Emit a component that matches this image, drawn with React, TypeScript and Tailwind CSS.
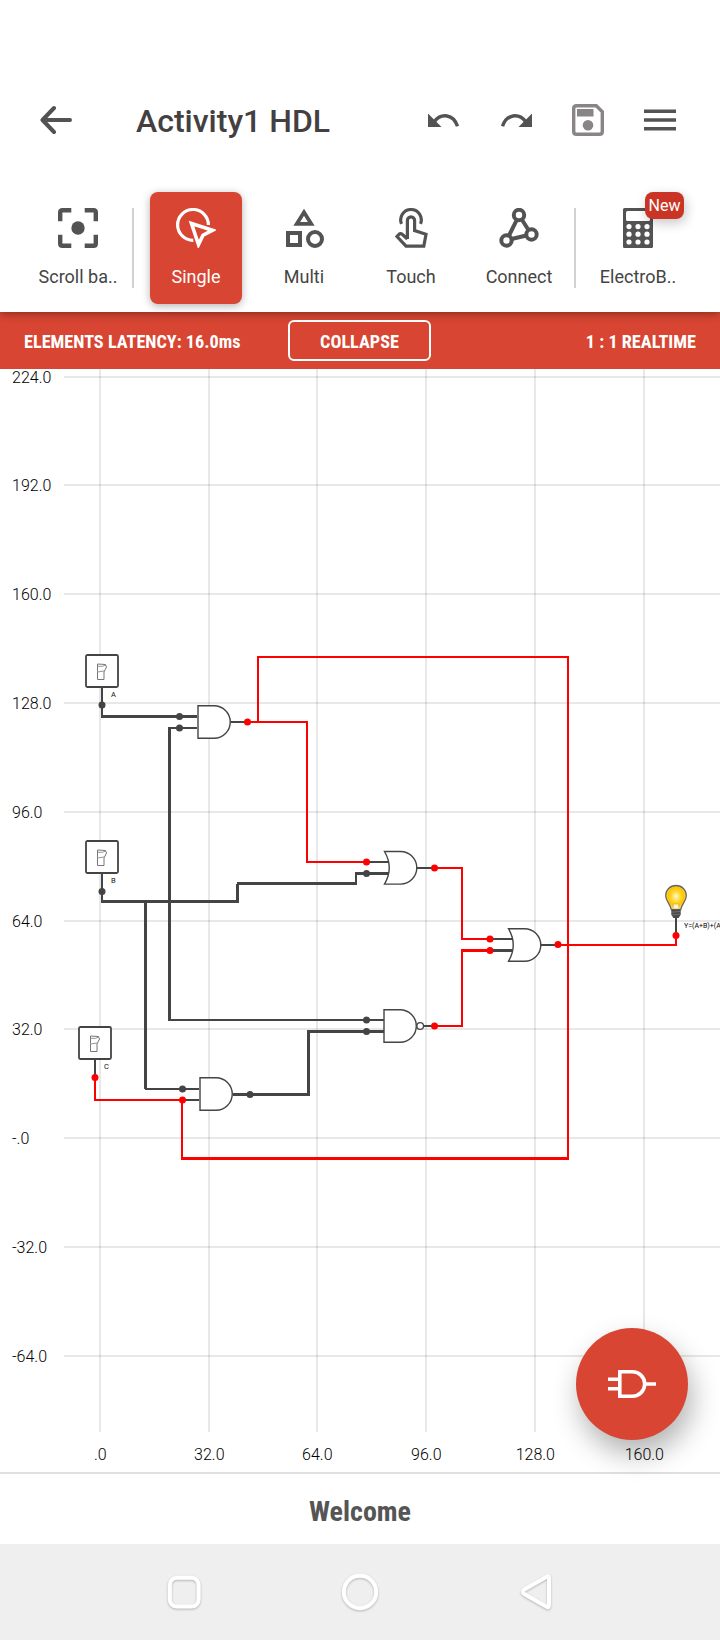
import React from "react";

const INK = "#444444";
const HOT = "#ff0000";

type Wire = { d: string; w?: number; hot?: boolean };

const wires: Wire[] = [
  { d: "M102 688V717" },
  { d: "M101 716.5H197", w: 3 },
  { d: "M168 728H197" },
  { d: "M169.5 727V1021", w: 3 },
  { d: "M168 1020H384" },
  { d: "M102 874V903" },
  { d: "M101 901.5H239", w: 3 },
  { d: "M237.5 884V902", w: 3 },
  { d: "M237 883.5H357", w: 3 },
  { d: "M356 884V872" },
  { d: "M356 873.5H389", w: 3 },
  { d: "M145.5 901V1089", w: 3 },
  { d: "M145 1089H199" },
  { d: "M95 1060V1078" },
  { d: "M182 1100H199" },
  { d: "M231 722H246" },
  { d: "M368 862H389" },
  { d: "M417 868H434" },
  { d: "M490 939H512" },
  { d: "M490 950.5H512", w: 3 },
  { d: "M541 945H558" },
  { d: "M424 1026H434" },
  { d: "M233 1094.5H310", w: 3 },
  { d: "M308.5 1096V1030", w: 3 },
  { d: "M308 1031.5H384", w: 3 },
  { d: "M676 917V935" },
  { d: "M247 722H307V862H366", hot: true },
  { d: "M258 722V657H568V1160", hot: true },
  { d: "M569 1158.5H181", w: 3, hot: true },
  { d: "M182 1160V1100H95V1078", hot: true },
  { d: "M434 868H462V939H490", hot: true },
  { d: "M490 950.5H461", w: 3, hot: true },
  { d: "M462 950V1026H434", hot: true },
  { d: "M558 945H676V935", hot: true },
];

const nodes: [number, number, boolean][] = [
  [102, 705, false],
  [179.5, 716.5, false],
  [179.5, 728, false],
  [247.5, 722, true],
  [102, 891.5, false],
  [366.5, 862, true],
  [366.5, 873.5, false],
  [434.5, 868, true],
  [490, 939, true],
  [490, 950.5, true],
  [558, 944.5, true],
  [676, 935.5, true],
  [366.5, 1020, false],
  [366.5, 1031.5, false],
  [434.5, 1026, true],
  [95, 1077.5, true],
  [182.5, 1089, false],
  [182.5, 1100, true],
  [250, 1094.5, false],
];

const columns: [number, string][] = [
  [100, ".0"],
  [209, "32.0"],
  [317, "64.0"],
  [426, "96.0"],
  [535, "128.0"],
  [644, "160.0"],
];

const rows: [number, string][] = [
  [377, "224.0"],
  [485, "192.0"],
  [594, "160.0"],
  [703, "128.0"],
  [812, "96.0"],
  [921, "64.0"],
  [1029, "32.0"],
  [1138, "-.0"],
  [1247, "-32.0"],
  [1356, "-64.0"],
];

function AndGate({ x, y }: { x: number; y: number }) {
  return <path d={`M${x} ${y}h16a16.3 16.3 0 0 1 0 32.6h-16z`} fill="#fff" stroke={INK} strokeWidth="1.4" />;
}

function OrGate({ x, y }: { x: number; y: number }) {
  return <path d={`M${x} ${y}h16a16.3 16.3 0 0 1 0 32.6h-16q9.5 -16.3 0 -32.6z`} fill="#fff" stroke={INK} strokeWidth="1.4" />;
}

function ToggleSwitch({ x, y, name }: { x: number; y: number; name: string }) {
  return (
    <g transform={`translate(${x} ${y})`}>
      <rect x="0.5" y="0.5" width="32" height="32" rx="1.5" fill="#fff" stroke={INK} strokeWidth="1.8" />
      <path d="M12 9.500l8 0.500 1 2.500-2.500 5v7.500h-6.500v-8z" fill="#fff" stroke="#777" strokeWidth="1" />
      <path d="M12 11.800h5l3.500-1.500M12 17.500l6.500-1" fill="none" stroke="#888" strokeWidth="0.9" />
      <text x="25.500" y="42.500" fontSize="7.500" fill="#111">{name}</text>
    </g>
  );
}

function Bulb() {
  return (
    <g>
      <defs>
        <radialGradient id="glow" cx="0.5" cy="0.45" r="0.5">
          <stop offset="0" stopColor="#fff9d0" />
          <stop offset="0.4" stopColor="#ffdc3c" />
          <stop offset="0.75" stopColor="#ffc400" />
          <stop offset="0.9" stopColor="#ffcf30" />
          <stop offset="1" stopColor="#ffe680" />
        </radialGradient>
      </defs>
      <path d="M676 885.500c-6 0-10.300 4.500-10.300 10.200 0 5.500 4.800 8.500 5.600 14h9.400c.8-5.500 5.600-8.500 5.600-14 0-5.700-4.300-10.200-10.300-10.200z" fill="url(#glow)" stroke="#666" strokeWidth="1.300" />
      <path d="M673 909l.3-5h5.400l.3 5z" fill="#fff4cc" stroke="#c9a23a" strokeWidth="0.600" />
      <path d="M671.300 909.500h9.400v5l-2 3.500h-5.400l-2-3.500z" fill="#4a4a4a" />
      <path d="M671.300 912.300l9.400-1M671.600 915l9-1" stroke="#888" strokeWidth="0.600" />
    </g>
  );
}

function CircuitBoard() {
  return (
    <svg className="block h-[1103px] w-[720px] font-[Roboto,sans-serif]" viewBox="0 369 720 1103">
      {rows.map(([y]) => (
        <path key={y} d={`M64 ${y}H720`} stroke="#000" strokeOpacity="0.09" strokeWidth="2" />
      ))}
      {columns.map(([x]) => (
        <path key={x} d={`M${x} 369V1432`} stroke="#000" strokeOpacity="0.09" strokeWidth="2" />
      ))}
      {rows.map(([y, t]) => (
        <text key={y} x="12" y={y + 6} fontSize="16" fontWeight="300" fill="#000">{t}</text>
      ))}
      {columns.map(([x, t]) => (
        <text key={x} x={x + 0.3} y="1460" fontSize="16" fontWeight="300" fill="#000" textAnchor="middle">{t}</text>
      ))}
      {wires.map((w) => (
        <path key={w.d} d={w.d} fill="none" stroke={w.hot ? HOT : INK} strokeWidth={w.w ?? 2} />
      ))}
      <AndGate x={198} y={705.7} />
      <AndGate x={200} y={1077.7} />
      <AndGate x={384} y={1009.7} />
      <circle cx="420.200" cy="1026" r="3.300" fill="#fff" stroke={INK} strokeWidth="1.300" />
      <OrGate x={384.5} y={851.5} />
      <OrGate x={508.5} y={928.7} />
      <ToggleSwitch x={85.5} y={654.500} name="A" />
      <ToggleSwitch x={85.5} y={840.500} name="B" />
      <ToggleSwitch x={78.5} y={1026.500} name="C" />
      <Bulb />
      {nodes.map(([x, y, hot]) => (
        <circle key={`${x}-${y}`} cx={x} cy={y} r="3.500" fill={hot ? HOT : INK} />
      ))}
      <text x="684" y="927.500" fontSize="7" fill="#000">Y=(A+B)+(A</text>
    </svg>
  );
}

function FocusIcon() {
  return (
    <svg className="size-10" viewBox="0 0 40 40" fill="none" stroke="#535353" strokeWidth="4.400">
      <path d="M2.200 13.300V4.500Q2.200 2.200 4.500 2.200H13.300M26.700 2.200H35.500Q37.800 2.200 37.800 4.500V13.300M37.800 26.700V35.500Q37.800 37.800 35.500 37.800H26.700M13.300 37.800H4.500Q2.200 37.800 2.200 35.500V26.700" />
      <circle cx="20" cy="20" r="6.700" fill="#535353" stroke="none" />
    </svg>
  );
}

function SingleIcon() {
  return (
    <svg className="size-10" viewBox="0 0 40 40" fill="none" stroke="#fff">
      <path d="M17.300 32.300A15.400 15.400 0 1 1 32.400 17" strokeWidth="3.200" />
      <path d="M15.500 15.500L36.500 22.200L27 27.200L22.500 36.500z" strokeWidth="3.600" />
    </svg>
  );
}

function ShapesIcon() {
  return (
    <svg className="size-10" viewBox="0 0 40 40" fill="none" stroke="#535353" strokeWidth="4">
      <path d="M20 4.300L27.200 15.800H12.800z" strokeWidth="3.800" />
      <rect x="4" y="25" width="12" height="12" />
      <circle cx="31" cy="31" r="7" />
    </svg>
  );
}

function TapIcon() {
  return (
    <svg className="size-10" viewBox="0 0 40 40" fill="none" stroke="#535353" strokeWidth="3.200">
      <path d="M10.500 15.800A10.300 10.300 0 1 1 29.500 15.800" />
      <path d="M16.400 31V12.500a3.600 3.600 0 0 1 7.200 0V22.500L35 26.300L32.800 38.200H15L6 28.500L8 26.300Q9.500 25 11.500 26.500L16.400 31" />
    </svg>
  );
}

function ConnectIcon() {
  return (
    <svg className="size-10" viewBox="0 0 40 40" fill="none" stroke="#535353" strokeWidth="4">
      <circle cx="20" cy="7" r="5.200" />
      <circle cx="7.500" cy="32.500" r="5.200" />
      <circle cx="32.500" cy="26.500" r="5.200" />
      <path d="M17.800 11.800L10 27.500M22.800 11.500L29.500 22M12.500 31L27.500 27.500" />
    </svg>
  );
}

function CalculatorIcon() {
  return (
    <svg className="size-10" viewBox="0 0 40 40">
      <rect x="5" y="0" width="30" height="40" rx="1.500" fill="#535353" />
      <rect x="8" y="3" width="24" height="10" rx="1.500" fill="#fff" />
      {[18.600, 26.200, 34].map((cy) => [11, 20, 29].map((cx) => <circle key={`${cx}-${cy}`} cx={cx} cy={cy} r="2.600" fill="#fff" />))}
    </svg>
  );
}

function Tool({ label, active, children }: { label: string; active?: boolean; children: React.ReactNode }) {
  return (
    <div
      className={
        active
          ? "flex h-28 w-[92px] shrink-0 flex-col items-center rounded-lg bg-[#d84532] pt-4 text-white shadow-[0_2px_8px_rgba(0,0,0,0.3)]"
          : "flex h-28 w-[92px] shrink-0 flex-col items-center pt-4 text-[#444]"
      }
    >
      {children}
      <span className="mt-[17px] text-[18px] leading-6 whitespace-nowrap">{label}</span>
    </div>
  );
}

function Header() {
  return (
    <header className="relative z-20 flex h-[104px] items-center bg-white pt-2 pl-10">
      <svg className="h-8 w-8" viewBox="0 0 32 32" fill="none" stroke="#535353" strokeWidth="4" strokeLinecap="round" strokeLinejoin="round">
        <path d="M30 16H3M14 4L2.500 16L14 28" />
      </svg>
      <h1 className="ml-16 w-[292px] pt-0.5 text-[32px] leading-10 font-medium whitespace-nowrap text-[#444041]">Activity1 HDL</h1>
      <svg className="h-8 w-8" viewBox="0 0 32 32" fill="none">
        <path d="M0 9.500V23H13.500z" fill="#535353" />
        <path d="M6.500 17.500C13 8.800 25.500 9.800 29.500 22.300" stroke="#535353" strokeWidth="3.400" />
      </svg>
      <svg className="ml-10 h-8 w-8" viewBox="0 0 32 32" fill="none">
        <path d="M32 9.500V23H18.500z" fill="#535353" />
        <path d="M25.500 17.500C19 8.800 6.500 9.800 2.500 22.300" stroke="#535353" strokeWidth="3.400" />
      </svg>
      <svg className="ml-10 h-8 w-8" viewBox="0 0 32 32" fill="none">
        <path d="M4.500 1.700H24.300L30.300 7.700V27.500Q30.300 30.300 27.500 30.300H4.500Q1.700 30.300 1.700 27.500V4.500Q1.700 1.700 4.500 1.700z" stroke="#898586" strokeWidth="3.400" />
        <rect x="5" y="5" width="16.500" height="7.500" fill="#898586" />
        <circle cx="16" cy="21.300" r="5.300" fill="#898586" />
      </svg>
      <svg className="ml-10 h-8 w-8" viewBox="0 0 32 32" stroke="#535353" strokeWidth="3.600">
        <path d="M0 7.200H32M0 16H32M0 24.800H32" />
      </svg>
    </header>
  );
}

export default function App() {
  return (
    <div className="relative flex h-[1640px] w-[720px] flex-col overflow-hidden bg-white pt-16 font-[Roboto,sans-serif]">
      <Header />
      <div className="z-10 flex h-36 items-start bg-white pt-6 pl-8 shadow-[0_2px_8px_rgba(0,0,0,0.35)]">
        <Tool label="Scroll ba.."><FocusIcon /></Tool>
        <div className="mt-4 mr-4 ml-2 h-20 w-0.5 shrink-0 bg-[#d2d2d2]" />
        <Tool label="Single" active><SingleIcon /></Tool>
        <div className="w-4 shrink-0" />
        <Tool label="Multi"><ShapesIcon /></Tool>
        <div className="w-[15px] shrink-0" />
        <Tool label="Touch"><TapIcon /></Tool>
        <div className="w-4 shrink-0" />
        <Tool label="Connect"><ConnectIcon /></Tool>
        <div className="mt-4 mr-4 ml-[9px] h-20 w-0.5 shrink-0 bg-[#d2d2d2]" />
        <div className="relative">
          <Tool label="ElectroB.."><CalculatorIcon /></Tool>
          <span className="absolute top-0 left-[53px] flex h-[27px] w-[39px] items-center justify-center rounded-lg bg-[#c93425] text-[16px] text-white shadow-[2px_4px_12px_rgba(0,0,0,0.22)]">New</span>
        </div>
      </div>
      <div className="flex h-[57px] shrink-0 items-center bg-[#d84532] px-6 text-[18.200px] font-bold text-white [font-stretch:75%] [font-family:'Roboto_Condensed',Roboto,sans-serif]">
        <div className="w-[264px] pt-0.5 whitespace-nowrap">ELEMENTS LATENCY: 16.0ms</div>
        <div className="flex h-[41px] w-[143px] items-center justify-center rounded-md border-2 border-white pt-0.5">COLLAPSE</div>
        <div className="flex-1 pt-0.5 text-right whitespace-nowrap">1 : 1 REALTIME</div>
      </div>
      <CircuitBoard />
      <div className="flex h-[72px] shrink-0 items-center justify-center border-t-2 border-[#e0e0e0] bg-white pt-1.5 text-[28px] font-bold text-[#555] [font-stretch:75%] [font-family:'Roboto_Condensed',Roboto,sans-serif]">
        Welcome
      </div>
      <nav className="flex h-24 shrink-0 items-center justify-center gap-[136px] bg-[#efefef]">
        <svg className="size-10 drop-shadow-[0_1px_1px_rgba(0,0,0,0.25)]" viewBox="0 0 40 40" fill="none" stroke="#fff" strokeWidth="4">
          <rect x="5.800" y="5.800" width="28.800" height="28.800" rx="7" />
        </svg>
        <svg className="size-10 drop-shadow-[0_1px_1px_rgba(0,0,0,0.25)]" viewBox="0 0 40 40" fill="none" stroke="#fff" strokeWidth="4">
          <circle cx="20" cy="20" r="16.200" />
        </svg>
        <svg className="size-10 drop-shadow-[0_1px_1px_rgba(0,0,0,0.25)]" viewBox="0 0 40 40" fill="none" stroke="#fff" strokeWidth="4" strokeLinejoin="round">
          <path d="M30.200 5Q33 3 33 6.500V33Q33 36.500 30.200 34.400L8.200 22Q5.500 19.700 8.200 17.500z" />
        </svg>
      </nav>
      <button className="absolute top-[1328px] left-[576px] flex size-28 items-center justify-center rounded-full bg-[#d84532] shadow-[4px_14px_28px_rgba(0,0,0,0.3)]">
        <svg className="h-7 w-12" viewBox="0 0 48 28" fill="none" stroke="#fff" strokeWidth="3.600">
          <path d="M11.800 1.800H24.500a12.200 12.200 0 0 1 0 24.400H11.800zM0 9.300H11M0 18.700H11M36.500 14H48" />
        </svg>
      </button>
    </div>
  );
}
